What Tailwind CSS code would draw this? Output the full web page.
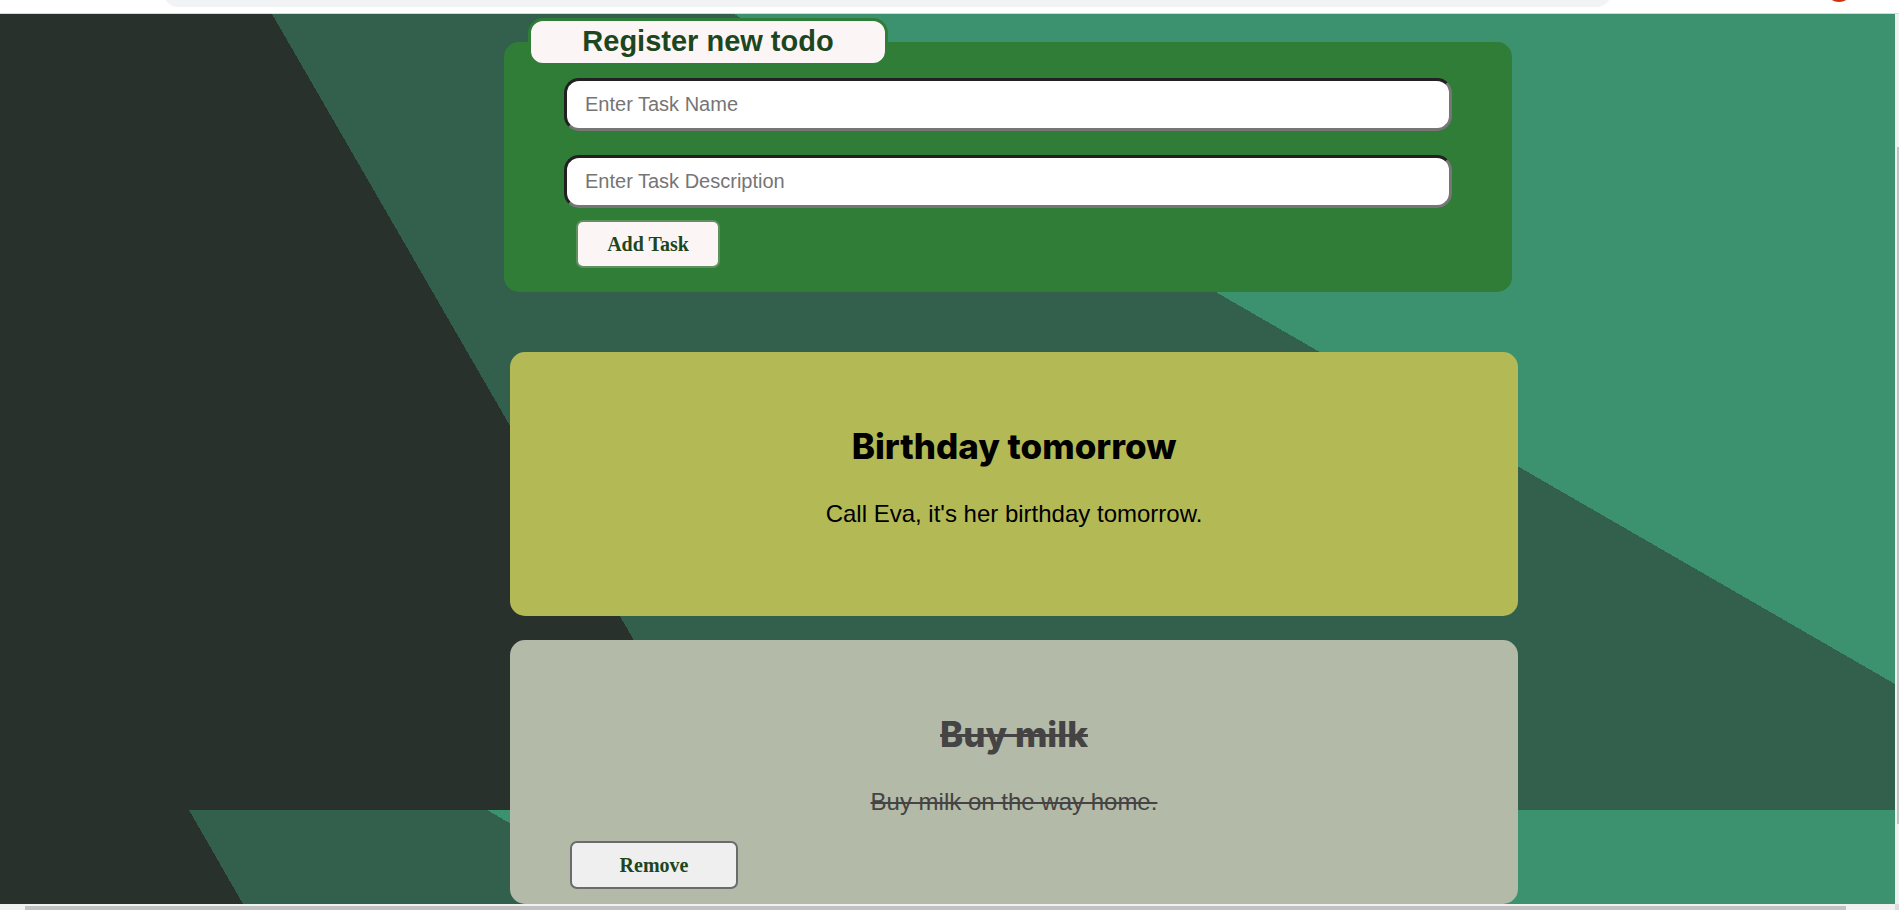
<!DOCTYPE html>
<html lang="en">
<head>
<meta charset="utf-8">
<title>Todo list</title>
<script src="https://cdn.jsdelivr.net/npm/@tailwindcss/browser@4"></script>
</head>
<body class="flex h-screen flex-col overflow-hidden bg-white font-['Liberation_Sans',Arial,sans-serif]">
  <header class="flex h-[14px] shrink-0 items-end overflow-hidden border-b border-[#d4dad8] pr-[46px] pl-[164px]">
    <div class="mb-[6px] h-7 flex-1 rounded-full bg-[#f1f3f4]"></div>
    <div class="mb-[11px] ml-[214px] size-7 rounded-full bg-[#c9300c]"></div>
  </header>

  <div class="grid min-h-0 flex-1 grid-cols-[1fr_4px] grid-rows-[1fr_6px]">
    <main class="relative isolate overflow-hidden bg-[#28312b] pr-[377px] pl-[504px]">
      <svg class="absolute inset-0 -z-10 size-full" viewBox="0 0 1895 890" preserveAspectRatio="none" shape-rendering="crispEdges" aria-hidden="true">
        <rect width="1895" height="890" fill="#28312b"/>
        <path d="M272 0H1895V796H732Z" fill="#32604c"/>
        <path d="M734 0H1895V670Z" fill="#3c916e"/>
        <path d="M189 796H1895V890H243Z" fill="#32604c"/>
        <path d="M487 796H1895V890H650Z" fill="#3c916e"/>
      </svg>

      <form class="mt-7 mr-[6px] rounded-[15px] bg-[#2f7d37] pb-6">
        <div class="flex px-6">
          <h1 class="-mt-6 h-12 w-[360px] rounded-[15px] border-3 border-[#2f7d37] bg-[#fcf5f5] text-center text-[29px] leading-[40px] font-bold text-[#1c4620]">Register new todo</h1>
        </div>
        <div class="mt-3 flex flex-col gap-6 px-15">
          <input type="text" aria-label="Task name" placeholder="Enter Task Name" class="h-[53px] w-full rounded-[15px] border-3 border-t-[#212121] border-r-[#767676] border-b-[#767676] border-l-[#212121] bg-white px-[18px] text-[20px] placeholder:text-[#757575]">
          <input type="text" aria-label="Task description" placeholder="Enter Task Description" class="h-[53px] w-full rounded-[15px] border-3 border-t-[#212121] border-r-[#767676] border-b-[#767676] border-l-[#212121] bg-white px-[18px] text-[20px] placeholder:text-[#757575]">
        </div>
        <button type="button" class="mt-3 ml-18 block h-12 w-36 rounded-[7px] border-2 border-[#5f915f] bg-[#fcf5f5] font-['Liberation_Serif',serif] text-[20px] font-bold text-[#1c4620]">Add Task</button>
      </form>

      <section class="mt-15 ml-[6px] flex flex-col gap-6">
        <article class="min-h-66 rounded-[15px] bg-[#b3ba55] px-15 pt-[70px] pb-[15px] text-center text-black">
          <h2 class="font-[Inter,sans-serif] text-[35px] leading-12 font-extrabold">Birthday tomorrow</h2>
          <p class="mt-7 text-[24px] leading-8">Call Eva, it's her birthday tomorrow.</p>
        </article>
        <article class="min-h-66 rounded-[15px] bg-[#b3baa8] px-15 pt-[70px] pb-[15px] text-center text-[#454343]">
          <h2 class="font-[Inter,sans-serif] text-[35px] leading-12 font-extrabold line-through decoration-3">Buy milk</h2>
          <p class="mt-7 text-[24px] leading-8 line-through decoration-2">Buy milk on the way home.</p>
          <button type="button" class="mt-[23px] block h-12 w-42 rounded-[7px] border-2 border-[#696b6c] bg-[#efefef] font-['Liberation_Serif',serif] text-[20px] font-bold text-[#1c4620]">Remove</button>
        </article>
      </section>
    </main>
    <div class="bg-[#f1f1f1] pt-[133px] pb-20 pl-[2px]"><div class="h-full bg-[#c1c1c1]"></div></div>
    <div class="bg-[#f1f1f1] pt-[2px] pr-[49px] pl-[25px]"><div class="h-full bg-[#c1c1c1]"></div></div>
    <div class="bg-[#dcdcdc]"></div>
  </div>
</body>
</html>
